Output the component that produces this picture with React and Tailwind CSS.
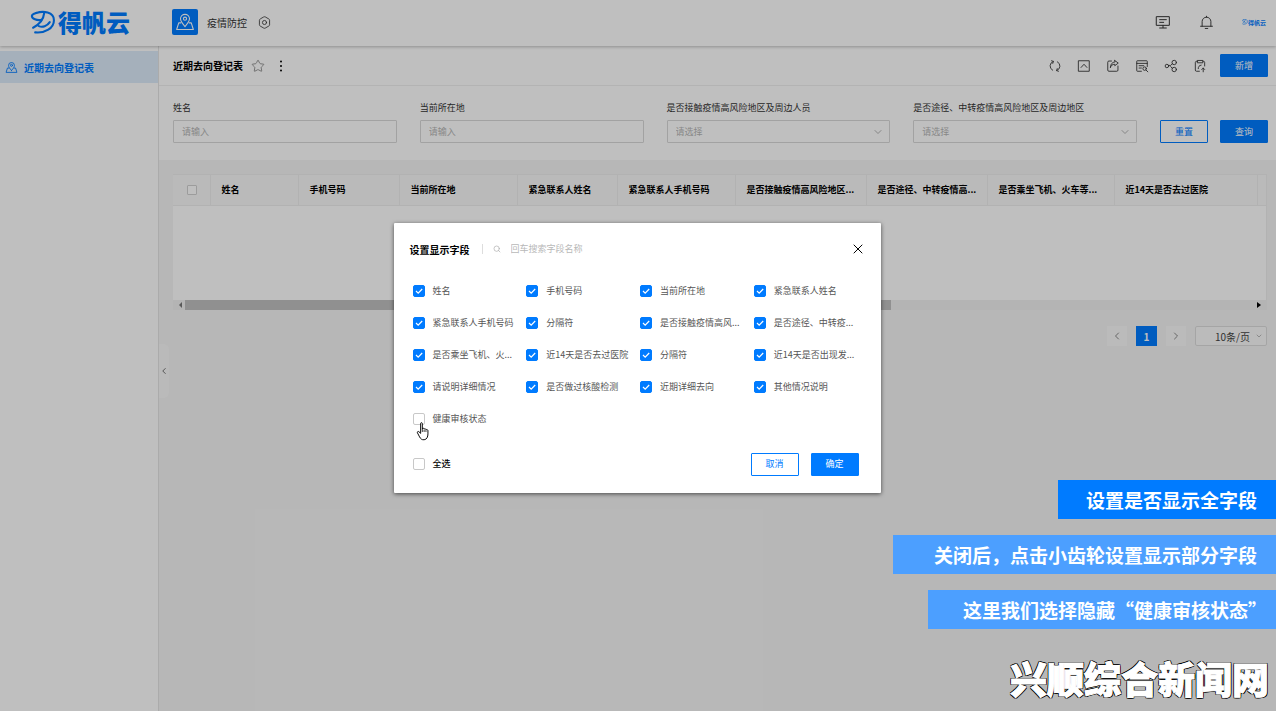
import React from "react";
import { ChevronDown, ChevronLeft, ChevronRight, Search, Star, X } from "lucide-react";

const Svg = ({ box = 24, className, children, width = 1.5 }) => (
  <svg
    viewBox={`0 0 ${box} ${box}`}
    className={className}
    fill="none"
    stroke="currentColor"
    strokeWidth={width}
    strokeLinecap="round"
    strokeLinejoin="round"
    aria-hidden="true"
  >
    {children}
  </svg>
);

const MapPin = ({ className, width }) => (
  <Svg className={className} width={width}>
    <path d="M12 17.5C8.5 13.6 6.6 11 6.6 8.2a5.4 5.4 0 0 1 10.8 0c0 2.800-1.900 5.400-5.400 9.300z" />
    <circle cx="12" cy="8" r="1.900" />
    <path d="M7 13H4.500L2 21h20l-2.500-8H17" />
  </Svg>
);

const Gear = ({ className }) => (
  <Svg className={className}>
    <path d="M10.600 1.700a2.800 2.800 0 0 1 2.800 0l6.600 3.800a2.800 2.800 0 0 1 1.400 2.400v8.200a2.800 2.800 0 0 1-1.400 2.400l-6.600 3.800a2.800 2.800 0 0 1-2.800 0L4 18.500a2.800 2.800 0 0 1-1.400-2.400V7.900A2.800 2.800 0 0 1 4 5.500z" />
    <circle cx="12" cy="12" r="3.800" />
  </Svg>
);

const Monitor = ({ className }) => (
  <Svg className={className}>
    <path d="M2.500 4h19v13h-19zM7 8.500h10M7 12.500h6M12 17v3.500M7 21h10" />
  </Svg>
);

const Bell = ({ className }) => (
  <Svg className={className}>
    <path d="M5 18v-7.500a7 7 0 0 1 14 0V18M2.500 18h19M10 21.500h4M12 3.500V2" />
  </Svg>
);

const Refresh = ({ className }) => (
  <Svg className={className}>
    <path d="M9 4.200A8.300 8.300 0 0 0 8 19.300M6 3l3.300 1.100L8.200 7.500M15 19.800A8.300 8.300 0 0 0 16 4.700M18 21l-3.300-1.100 1.100-3.400" />
  </Svg>
);

const ImageUp = ({ className }) => (
  <Svg className={className}>
    <path d="M3 3h18v18H3zM7 14.500l5-5.500 5 5.500" />
  </Svg>
);

const ShareOut = ({ className }) => (
  <Svg className={className}>
    <path d="M9.500 3.500H5a2 2 0 0 0-2 2V19a2 2 0 0 0 2 2h13.500a2 2 0 0 0 2-2v-7M15 2.500l6 4.500-6 4.500V9c-4 0-6.500 2-7.500 6 0-6 3-9.500 7.500-10z" />
  </Svg>
);

const TableSearch = ({ className }) => (
  <Svg className={className}>
    <path d="M11 21H4a1 1 0 0 1-1-1V4a1 1 0 0 1 1-1h16a1 1 0 0 1 1 1v9M3 7.500h18M7 11.500h8M7 15.500h4M19 19l3 3" />
    <circle cx="16.500" cy="16.500" r="3" />
  </Svg>
);

const Nodes = ({ className }) => (
  <Svg className={className}>
    <circle cx="5" cy="12" r="3" />
    <circle cx="17.500" cy="6" r="3.800" />
    <circle cx="17.500" cy="18" r="3.800" />
    <path d="M8 11h3.500l2.700-2.800M11.500 13l2.700 3" />
  </Svg>
);

const ClipExport = ({ className }) => (
  <Svg className={className}>
    <path d="M11 21H6a2 2 0 0 1-2-2V6a2 2 0 0 1 2-2h2M17 4h1a2 2 0 0 1 2 2v6M8 2.500h9v4H8zM9 16.500c0-3.500 1.500-5.500 5-6M17.500 15.500V22M15 18l2.500-2.500L20 18" />
  </Svg>
);

const LogoMark = ({ className }) => (
  <Svg className={className} box={24} width={2}>
    <path d="M5.500 2.800C12 .8 22.500 1.500 22.500 9.800 22.500 17.500 14 22.500 4.500 21.500" />
    <path d="M5.500 2.800C3 3.500 1.300 4.500 1.300 5.800c0 2.700 4.700 4.500 9.200 3.700" />
    <path d="M13 3.500C12.500 9 9 13.500 2.500 17M8 15.500c3.500 1.500 8 0 10.500-3.800" />
  </Svg>
);

const columns = [
  ["姓名", "w-[88px]"],
  ["手机号码", "w-[101px]"],
  ["当前所在地", "w-[118px]"],
  ["紧急联系人姓名", "w-[100px]"],
  ["紧急联系人手机号码", "w-[118px]"],
  ["是否接触疫情高风险地区...", "w-[131px]"],
  ["是否途径、中转疫情高...", "w-[121px]"],
  ["是否乘坐飞机、火车等...", "w-[127px]"],
  ["近14天是否去过医院", "w-[143px]"],
];

const fields = [
  "姓名",
  "手机号码",
  "当前所在地",
  "紧急联系人姓名",
  "紧急联系人手机号码",
  "分隔符",
  "是否接触疫情高风...",
  "是否途径、中转疫...",
  "是否乘坐飞机、火...",
  "近14天是否去过医院",
  "分隔符",
  "近14天是否出现发...",
  "请说明详细情况",
  "是否做过核酸检测",
  "近期详细去向",
  "其他情况说明",
  "健康审核状态",
];

const tools = [
  ["刷新", Refresh],
  ["图表", ImageUp],
  ["分享", ShareOut],
  ["筛选", TableSearch],
  ["关联", Nodes],
  ["导出", ClipExport],
];

const btn = "h-[23px] w-12 shrink-0 rounded-[1px] border border-[#007bff] text-[9px]";
const primary = `${btn} bg-[#007bff] text-white`;
const outline = `${btn} bg-white text-[#007bff]`;
const control =
  "block h-[23px] w-full rounded-[1px] border border-[#d9d9d9] bg-white px-2 text-[9px] placeholder:text-[#b5b5b5]";

function Check({ label, checked = false, strong = false }) {
  return (
    <label className="flex h-8 items-center gap-2">
      <span className="grid h-3 w-3 shrink-0">
        <input
          type="checkbox"
          defaultChecked={checked}
          className="peer col-start-1 row-start-1 h-3 w-3 appearance-none rounded-[2px] border border-[#c8c8c8] bg-white checked:border-[#007bff] checked:bg-[#007bff]"
        />
        <svg
          viewBox="0 0 12 12"
          className="pointer-events-none col-start-1 row-start-1 hidden h-3 w-3 peer-checked:block"
          fill="none"
          stroke="white"
          strokeWidth="1.2"
          aria-hidden="true"
        >
          <path d="M3 6l2.200 2.200L9.200 4" />
        </svg>
      </span>
      <span
        className={
          strong ? "text-[9px] font-medium text-black" : "text-[9px] whitespace-nowrap text-[#555]"
        }
      >
        {label}
      </span>
    </label>
  );
}

function Field({ id, label, children }) {
  return (
    <div className="min-w-0 flex-1">
      <label htmlFor={id} className="mb-1 block text-[9px] leading-4 whitespace-nowrap text-[#333]">
        {label}
      </label>
      {children}
    </div>
  );
}

function Choice({ id }) {
  return (
    <div className="relative">
      <select id={id} className={`${control} appearance-none text-[#b5b5b5]`}>
        <option>请选择</option>
      </select>
      <ChevronDown className="pointer-events-none absolute top-1.5 right-1.5 h-3 w-3 text-[#999]" strokeWidth={1.5} />
    </div>
  );
}

function Header() {
  return (
    <header className="z-10 flex h-[46px] items-center bg-white pr-[10px] pb-0.5 pl-[30px] shadow-[0_1px_3px_rgba(0,0,0,0.25)]">
      <a href="#home" className="flex w-[142px] items-center gap-0.5 text-[#007bff]">
        <LogoMark className="h-[25px] w-[26px]" />
        <span className="text-[24px] leading-none font-black">得帆云</span>
      </a>
      <span className="grid h-[26px] w-[26px] place-items-center rounded-[2px] bg-[#007bff] text-white">
        <MapPin className="h-5 w-5" width={1.3} />
      </span>
      <span className="ml-[9px] text-[10px] text-[#333]">疫情防控</span>
      <button aria-label="设置" className="ml-[11px] text-[#333]">
        <Gear className="h-[13px] w-[13px]" />
      </button>
      <div className="ml-auto flex items-center gap-7 text-[#333]">
        <button aria-label="工作台">
          <Monitor className="h-4 w-4" />
        </button>
        <button aria-label="通知">
          <Bell className="h-[15px] w-[15px]" />
        </button>
        <a href="#account" className="flex items-center text-[#007bff]">
          <LogoMark className="h-[6px] w-[6px]" />
          <span className="text-[6px] font-bold">得帆云</span>
        </a>
      </div>
    </header>
  );
}

function Dialog() {
  return (
    <div
      role="dialog"
      aria-label="设置显示字段"
      className="w-[487px] rounded-[1px] bg-white pt-4 pr-[13px] pb-[13px] pl-4 shadow-[0_1px_4px_rgba(0,0,0,0.6)]"
    >
      <div className="flex h-5 items-center">
        <h2 className="text-[10px] font-bold text-black">设置显示字段</h2>
        <span className="ml-3 h-[10px] w-px bg-[#ddd]" />
        <Search className="ml-[10px] h-2 w-2 text-[#aaa]" />
        <input
          aria-label="搜索字段"
          placeholder="回车搜索字段名称"
          className="ml-[10px] min-w-0 flex-1 text-[9px] placeholder:text-[#b8b8b8]"
        />
        <button aria-label="关闭" className="mr-0.5 text-black">
          <X className="h-4 w-4" strokeWidth={1.5} />
        </button>
      </div>
      <div className="mt-4 grid grid-cols-4 pl-[3px]">
        {fields.map((f, i) => (
          <Check key={i} label={f} checked={i < fields.length - 1} />
        ))}
      </div>
      <div className="mt-[13px] flex h-8 items-center gap-3 pr-[9px] pl-[3px]">
        <div className="flex-1">
          <Check label="全选" strong />
        </div>
        <button className={outline}>取消</button>
        <button className={primary}>确定</button>
      </div>
    </div>
  );
}

export default function App() {
  return (
    <div className="relative flex min-h-screen flex-col overflow-hidden bg-[#f5f5f5] font-['Noto_Sans_CJK_SC',sans-serif]">
      <Header />
      <div className="flex flex-1">
        <nav className="w-[159px] shrink-0 border-r border-[#e4e4e4] bg-white pt-[5px]">
          <a
            href="#register"
            className="flex h-8 items-center gap-1.5 bg-[#dcebfa] pl-[5px] text-[10px] font-bold text-[#007bff]"
          >
            <MapPin className="h-[13px] w-[13px]" width={1.6} />
            近期去向登记表
          </a>
        </nav>
        <main className="relative min-w-0 flex-1">
          <section className="bg-white">
            <div className="flex h-10 items-center border-b border-[#efefef] pr-2 pl-[14px]">
              <h1 className="text-[10px] font-bold text-black">近期去向登记表</h1>
              <button aria-label="收藏" className="ml-2 text-[#888]">
                <Star className="h-[14px] w-[14px]" strokeWidth={1.5} />
              </button>
              <button aria-label="更多" className="ml-[10px] text-black">
                <svg viewBox="0 0 12 12" className="h-3 w-3" fill="currentColor" aria-hidden="true">
                  <circle cx="6" cy="1.500" r="1" />
                  <circle cx="6" cy="6" r="1" />
                  <circle cx="6" cy="10.500" r="1" />
                </svg>
              </button>
              <div className="ml-auto flex items-center gap-[15px] text-[#333]">
                {tools.map(([name, Icon]) => (
                  <button key={name} aria-label={name}>
                    <Icon className="h-[14px] w-[14px]" />
                  </button>
                ))}
              </div>
              <button className={`${primary} ml-[13px]`}>新增</button>
            </div>
            <form className="flex items-end gap-[23px] pt-[14px] pr-2 pb-[17px] pl-[14px]">
              <Field id="name" label="姓名">
                <input id="name" placeholder="请输入" className={control} />
              </Field>
              <Field id="place" label="当前所在地">
                <input id="place" placeholder="请输入" className={control} />
              </Field>
              <Field id="contact" label="是否接触疫情高风险地区及周边人员">
                <Choice id="contact" />
              </Field>
              <Field id="transit" label="是否途径、中转疫情高风险地区及周边地区">
                <Choice id="transit" />
              </Field>
              <div className="flex gap-3">
                <button type="reset" className={outline}>重置</button>
                <button type="button" className={primary}>查询</button>
              </div>
            </form>
          </section>

          <section className="pt-[14px] pr-[9px] pl-[14px]">
            <div className="h-[126px] overflow-hidden border-r border-[#eee] bg-white">
              <table className="w-full table-fixed border-collapse text-left">
                <thead>
                  <tr className="h-[31px] border-y border-[#eee] bg-[#f8f8f8]">
                    <th className="w-[37px] border-r border-[#eee] pl-[14px]">
                      <input
                        type="checkbox"
                        aria-label="全选记录"
                        className="block h-[10px] w-[10px] appearance-none rounded-[1px] border border-[#d0d0d0] bg-white"
                      />
                    </th>
                    {columns.map(([name, w]) => (
                      <th
                        key={name}
                        className={`${w} border-r border-[#eee] pl-[11px] text-[9px] font-bold whitespace-nowrap text-black`}
                      >
                        {name}
                      </th>
                    ))}
                    <td />
                  </tr>
                </thead>
              </table>
            </div>
            <div className="flex h-[10px] items-center bg-[#f0f0f0] px-1">
              <svg viewBox="0 0 8 8" className="h-2 w-2 text-[#777]" fill="currentColor" aria-hidden="true">
                <path d="M5 1v6L2 4z" />
              </svg>
              <div className="flex-1">
                <div className="h-[10px] w-[66%] bg-[#c1c1c1]" />
              </div>
              <svg viewBox="0 0 8 8" className="h-2 w-2 text-black" fill="currentColor" aria-hidden="true">
                <path d="M2 1v6l4-3z" />
              </svg>
            </div>
            <div className="mt-4 flex items-center justify-end gap-[9px] text-[10px] text-[#444]">
              <button aria-label="上一页" className="grid h-5 w-5 place-items-center bg-[#fafafa] text-[#888]">
                <ChevronLeft className="h-3 w-3" />
              </button>
              <button className="h-5 w-[21px] bg-[#007bff] font-bold text-white">1</button>
              <button aria-label="下一页" className="grid h-5 w-5 place-items-center bg-[#fafafa] text-[#888]">
                <ChevronRight className="h-3 w-3" />
              </button>
              <div className="relative">
                <select
                  aria-label="每页条数"
                  className="block h-5 w-[72px] appearance-none rounded-[2px] border border-[#ddd] bg-[#fafafa] pl-[19px]"
                >
                  <option>10条/页</option>
                </select>
                <ChevronDown className="pointer-events-none absolute top-[6px] right-1 h-2 w-2 text-[#999]" />
              </div>
            </div>
          </section>

          <button
            aria-label="收起侧栏"
            className="absolute top-[298px] left-0 grid h-[54px] w-[10px] place-items-center rounded-r-md bg-[#f9f9f9] text-[#555]"
          >
            <ChevronLeft className="h-[10px] w-[10px]" />
          </button>
        </main>
      </div>

      <div className="absolute inset-0 z-20 flex items-start justify-center bg-black/25 pt-[223px] pr-0.5">
        <Dialog />
      </div>

      <svg viewBox="0 0 14 20" className="absolute top-[422px] left-[416px] z-30 h-[19px] w-[14px]" aria-hidden="true">
        <path
          d="M4.500 1.500c0-1 1.800-1 1.800 0v6l.200-.600c.600-.600 1.600-.300 1.700.500.500-.600 1.700-.400 1.900.600.700-.400 2 0 2.100 1v3.500c0 3-1.200 6-4 6.200-2.500.200-3.700-1-4.800-3L1.200 11.500c-.600-1 .500-2 1.500-1.300l1.800 1.800z"
          fill="white"
          stroke="black"
          strokeWidth="1"
        />
        <path d="M6.300 7.500v3M8.200 8v2.500M10.100 8.500v2" stroke="black" strokeWidth="0.800" />
      </svg>

      <div className="absolute top-[480px] right-0 z-30 flex flex-col items-end gap-4 text-[19px] leading-[39px] font-bold text-white">
        <p className="bg-[#007bff] pr-[19px] pl-7">设置是否显示全字段</p>
        <p className="bg-[#4c9fff] pr-[19px] pl-[41px]">关闭后，点击小齿轮设置显示部分字段</p>
        <p className="bg-[#4c9fff] pr-[9px] pl-[35px]">这里我们选择隐藏“健康审核状态”</p>
      </div>

      <p className="absolute right-[7px] bottom-[11px] z-30 text-[37px] leading-[44px] font-black text-white [-webkit-text-stroke:1px_white] [text-shadow:1px_0_black,-1px_0_black,0_1px_black,0_-1px_black,1px_1px_black,-1px_-1px_black,1px_-1px_black,-1px_1px_black]">
        兴顺综合新闻网
      </p>
    </div>
  );
}
